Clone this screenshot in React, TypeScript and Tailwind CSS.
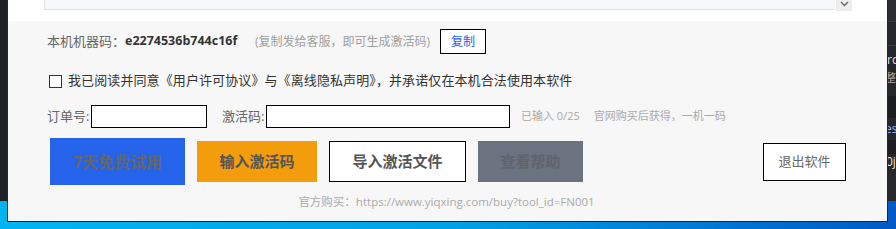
const SideStrip = () => (
  <div className="w-[8px] h-[201px] bg-[#26272a] overflow-hidden flex flex-col text-[12px] leading-none whitespace-nowrap">
    <div className="h-[22px] bg-[#2d2e31] border-b border-[#3a3b3e]" />
    <div className="h-[24px] border-b border-[#3d3e41]" />
    <div className="h-[26px] pt-[8px] text-[#e8e8e8] -ml-[1px]">ro</div>
    <div className="h-[24px] text-[#aaaaaa] text-[11px] -ml-[3px]">整</div>
    <div className="h-[22px] bg-[#1c1d20]" />
    <div className="h-[22px] pt-[5px] text-[#8fb8ff] -ml-[3px]">es</div>
    <div className="h-[14px] bg-[#1c1d20]" />
    <div className="h-[26px] pt-[2px] text-[#e8e8e8] -ml-[2px]">0j</div>
  </div>
);

const Window = () => (
  <div className="w-[881px] h-[222px] flex flex-col border-l border-r border-b border-[#1d2631]">
    <div className="h-[21px] bg-white flex items-start">
      <div className="ml-[36px] w-[791px] h-[10px] bg-[#f6f8fa] border-l border-b border-[#e1e3e7]" />
      <div className="ml-[1px] w-[16px] h-[11px] bg-[#ededed] flex justify-center">
        <svg width="9" height="6" viewBox="0 0 9 6" className="mt-[1px]">
          <path d="M1 1l3.5 3.5L8 1" fill="none" stroke="#666" strokeWidth="1.4" />
        </svg>
      </div>
    </div>

    <div className="flex-1 bg-[#f7f7f7] pl-[39px] pr-[41px] flex flex-col">
      <div className="mt-[8px] h-[25px] flex items-center whitespace-nowrap">
        <span className="w-[78px] text-[13px] text-[#666]">本机机器码：</span>
        <span className="w-[130px] text-[12.5px] font-bold text-[#333] font-['Open_Sans',sans-serif]">e2274536b744c16f</span>
        <span className="w-[185px] text-[12px] text-[#a0a0a0]">(复制发给客服，即可生成激活码)</span>
        <button className="w-[46px] h-[25px] border border-black bg-white text-[12px] text-[#2563eb]">
          复制
        </button>
      </div>

      <div className="mt-[17px] h-[20px] flex items-center whitespace-nowrap">
        <div className="ml-[2px] w-[13px] h-[13px] border border-[#333] bg-white" />
        <span className="ml-[6px] text-[13px] text-[#333] tracking-[0.1px]">
          我已阅读并同意《用户许可协议》与《离线隐私声明》，并承诺仅在本机合法使用本软件
        </span>
      </div>

      <div className="mt-[14px] h-[23px] flex items-center whitespace-nowrap">
        <span className="w-[44px] text-[13px] text-[#666]">订单号:</span>
        <div className="w-[116px] h-[23px] border border-black bg-white" />
        <span className="ml-[15px] w-[44px] text-[13px] text-[#666]">激活码:</span>
        <div className="w-[244px] h-[23px] border border-black bg-white" />
        <span className="ml-[11px] text-[11px] text-[#aaa]">已输入 0/25</span>
        <span className="ml-[14px] text-[11px] text-[#aaa]">官网购买后获得，一机一码</span>
      </div>

      <div className="mt-[10px] h-[47px] flex items-center">
        <button className="ml-[3px] w-[135px] h-[47px] bg-[#2563eb] text-[16px] font-bold text-[#666]">
          7天免费试用
        </button>
        <button className="ml-[12px] w-[120px] h-[41px] bg-[#f39c0c] text-[15px] font-bold text-[#555]">
          输入激活码
        </button>
        <button className="ml-[12px] w-[137px] h-[41px] border border-black bg-white text-[15px] font-bold text-[#555]">
          导入激活文件
        </button>
        <button className="ml-[12px] w-[105px] h-[41px] bg-[#6b7280] text-[15px] font-bold text-[#60646c]">
          查看帮助
        </button>
        <button className="ml-auto w-[83px] h-[38px] border border-black bg-white text-[13px] text-[#666]">
          退出软件
        </button>
      </div>

      <div className="mt-[8px] text-center text-[11.5px] text-[#aaa]">
        官方购买：https://www.yiqxing.com/buy?tool_id=FN001
      </div>
    </div>
  </div>
);

export default function App() {
  return (
    <div className="w-[896px] h-[229px] overflow-hidden bg-gradient-to-r from-[#00b4f2] via-[#00a2e6] to-[#0059c6] font-['Open_Sans','Noto_Sans_CJK_SC',sans-serif]">
      <div className="flex items-start">
        <div className="w-[7px] h-[201px] bg-[#1f2023]" />
        <Window />
        <SideStrip />
      </div>
    </div>
  );
}
